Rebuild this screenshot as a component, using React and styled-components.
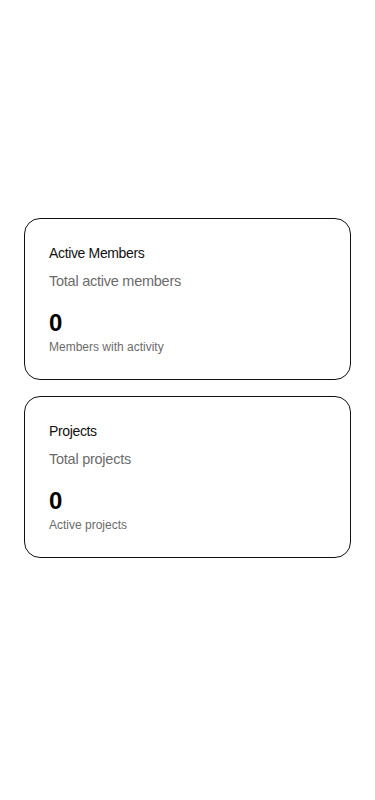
import React from 'react'
import styled, { createGlobalStyle } from 'styled-components';

const GlobalStyle = createGlobalStyle`
  body {
    margin: 0;
    background: #fff;
    font-family: "Liberation Sans", Arial, sans-serif;
  }
`;

const Page = styled.div`
  display: flex;
  flex-direction: column;
  gap: 16px;
  padding: 218px 24px 0;
`;

const Card = styled.div`
  border: 1px solid #111;
  border-radius: 16px;
  padding: 24px;
  background: #fff;
`;

const Title = styled.div`
  font-size: 14px;
  line-height: 20px;
  letter-spacing: -0.35px;
  color: #111;
`;

const Description = styled.div`
  margin-top: 8px;
  font-size: 14.5px;
  line-height: 20px;
  letter-spacing: -0.25px;
  color: #6b6b6b;
`;

const Value = styled.div`
  margin-top: 16px;
  font-size: 24px;
  line-height: 32px;
  font-weight: 700;
  color: #000;
`;

const Note = styled.div`
  font-size: 12px;
  line-height: 16px;
  color: #6b6b6b;
`;

const stats = [
  { id: 'members', title: 'Active Members', description: 'Total active members', value: 0, note: 'Members with activity' },
  { id: 'projects', title: 'Projects', description: 'Total projects', value: 0, note: 'Active projects' },
];

const App = () => {
  return (
    <>
      <GlobalStyle />
      <Page>
        {stats.map(stat => (
          <Card key={stat.id}>
            <Title>{stat.title}</Title>
            <Description>{stat.description}</Description>
            <Value>{stat.value}</Value>
            <Note>{stat.note}</Note>
          </Card>
        ))}
      </Page>
    </>
  );
}

export default App
